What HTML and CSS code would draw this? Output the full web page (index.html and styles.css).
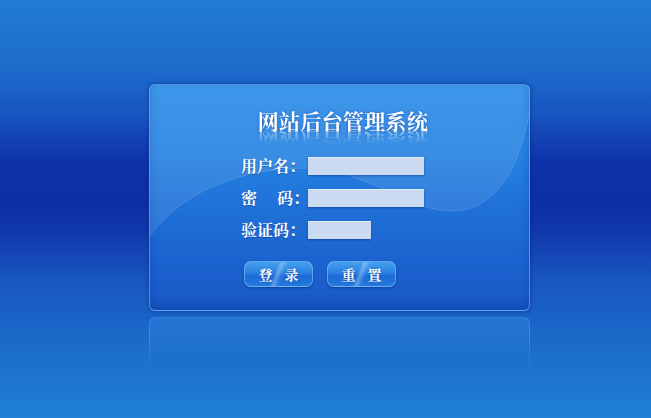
FILE: index.html
```html
<!DOCTYPE html>
<html lang="zh-CN">
<head>
<meta charset="utf-8">
<title>网站后台管理系统</title>
<link rel="stylesheet" href="styles.css">
</head>
<body>
<div class="stage">
  <div class="panel">
    <svg class="swoosh" viewBox="0 0 381 227" preserveAspectRatio="none" aria-hidden="true">
      <path d="M0,152 C30,112 80,86 150,84 C215,82 250,124 300,127 C345,130 372,85 381,28 L381,0 L0,0 Z" fill="rgba(255,255,255,0.09)"/>
      <path d="M0,152 C30,112 80,86 150,84 C215,82 250,124 300,127 C345,130 372,85 381,28" fill="none" stroke="rgba(255,255,255,0.14)" stroke-width="1"/>
    </svg>
    <h1 class="title">网站后台管理系统</h1>
    <div class="form">
      <div class="row"><span class="label">用户名：</span><span class="input wide"></span></div>
      <div class="row"><span class="label">密<span class="sp"></span>码：</span><span class="input wide"></span></div>
      <div class="row"><span class="label">验证码：</span><span class="input short"></span></div>
    </div>
    <div class="buttons">
      <button class="btn"><span>登</span><span>录</span></button>
      <button class="btn"><span>重</span><span>置</span></button>
    </div>
  </div>
  <div class="reflection"></div>
</div>
</body>
</html>
```
FILE: styles.css
```css
html, body {
  margin: 0;
  padding: 0;
}
body {
  width: 651px;
  height: 418px;
  overflow: hidden;
  background: linear-gradient(180deg, #217cd4 0%, #1e6ccc 16%, #1856c0 27%, #1240b2 34%, #0e33a8 39%, #0d2fa5 48%, #0f36aa 54%, #1445b4 60%, #1856c0 67%, #1b69c9 80%, #1f7fd6 100%);
  font-family: "Noto Serif CJK SC", "Noto Sans CJK SC", serif;
}
.stage {
  padding-top: 84px;
  padding-left: 149px;
  display: flex;
  flex-direction: column;
}
.panel {
  position: relative;
  width: 379px;
  height: 225px;
  border: 1px solid rgba(120, 190, 255, 0.55);
  border-radius: 6px;
  background: linear-gradient(180deg, #2a8de8 0%, #2683e2 30%, #1f70d8 55%, #1b62cf 80%, #1958c6 100%);
  box-shadow: 0 0 4px rgba(5, 30, 110, 0.6), inset 0 -6px 8px rgba(10, 50, 150, 0.35);
  display: flex;
  flex-direction: column;
  overflow: hidden;
}
.swoosh {
  position: absolute;
  left: 0;
  top: 0;
  width: 100%;
  height: 100%;
}
.title {
  position: relative;
  margin: 22px 0 0 7px;
  font-size: 21px;
  line-height: 26px;
  font-weight: bold;
  color: #ffffff;
  text-align: center;
  letter-spacing: 0.3px;
  text-shadow: 0 0 3px rgba(20, 60, 150, 0.6);
  -webkit-box-reflect: below -5px linear-gradient(transparent 40%, rgba(255, 255, 255, 0.55));
}
.form {
  position: relative;
  margin: 24px 0 0 91px;
  display: flex;
  flex-direction: column;
  gap: 14px;
}
.row {
  display: flex;
  align-items: center;
  height: 18px;
}
.label {
  width: 67px;
  font-size: 16px;
  line-height: 18px;
  font-weight: bold;
  color: #ffffff;
  white-space: nowrap;
  text-shadow: 0 1px 1px rgba(10, 40, 120, 0.5);
}
.sp {
  display: inline-block;
  width: 20px;
}
.input {
  display: block;
  height: 17px;
  background: #cadaf0;
  border-top: 1px solid #e6eefa;
  box-shadow: 0 1px 2px rgba(5, 30, 100, 0.45);
}
.wide {
  width: 116px;
}
.short {
  width: 63px;
}
.buttons {
  position: relative;
  margin: 22px 0 0 94px;
  display: flex;
  gap: 14px;
}
.btn {
  width: 69px;
  height: 26px;
  padding: 0;
  border: 1px solid rgba(120, 185, 250, 0.7);
  border-radius: 7px;
  background:
    linear-gradient(112deg, transparent 44%, rgba(255, 255, 255, 0.3) 49%, rgba(255, 255, 255, 0.08) 54%, transparent 58%),
    linear-gradient(180deg, #45a0ee 0%, #2a82e2 45%, #1c6ad6 60%, #2479de 100%);
  box-shadow: 0 1px 2px rgba(5, 30, 100, 0.5);
  display: flex;
  align-items: center;
  justify-content: center;
  gap: 12px;
  font-family: "Noto Serif CJK SC", "Noto Sans CJK SC", serif;
  font-size: 14px;
  font-weight: bold;
  color: #ffffff;
  text-shadow: 0 0 2px rgba(10, 40, 120, 0.6);
}
.reflection {
  width: 379px;
  height: 56px;
  margin-top: 6px;
  border: 1px solid rgba(110, 180, 250, 0.35);
  border-bottom: none;
  border-radius: 6px 6px 0 0;
  background: linear-gradient(180deg, rgba(60, 150, 240, 0.35) 0%, rgba(50, 140, 230, 0.15) 60%, rgba(40, 130, 220, 0) 100%);
  -webkit-mask-image: linear-gradient(180deg, #000 0%, #000 40%, transparent 100%);
  mask-image: linear-gradient(180deg, #000 0%, #000 40%, transparent 100%);
}
```
